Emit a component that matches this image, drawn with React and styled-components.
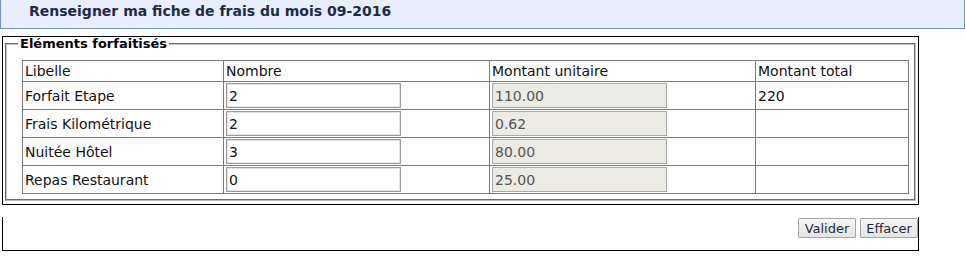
import styled, { createGlobalStyle } from "styled-components";

const GlobalStyle = createGlobalStyle`
  body {
    margin: 0;
    background: #ffffff;
    font-family: "DejaVu Sans", Verdana, sans-serif;
    font-size: 14px;
    color: #111111;
  }
`;

const lignes = [
  { libelle: "Forfait Etape", quantite: "2", montant: "110.00", total: "220" },
  { libelle: "Frais Kilométrique", quantite: "2", montant: "0.62", total: "" },
  { libelle: "Nuitée Hôtel", quantite: "3", montant: "80.00", total: "" },
  { libelle: "Repas Restaurant", quantite: "0", montant: "25.00", total: "" },
];

export default function App() {
  return (
    <>
      <GlobalStyle />
      <Title>Renseigner ma fiche de frais du mois 09-2016</Title>
      <Page>
        <CorpsForm>
          <Fieldset>
            <Legend>Eléments forfaitisés</Legend>
            <Table>
              <colgroup>
                <col style={{ width: 201 }} />
                <col style={{ width: 266 }} />
                <col style={{ width: 266 }} />
                <col />
              </colgroup>
              <thead>
                <tr>
                  <Th>Libelle</Th>
                  <Th>Nombre</Th>
                  <Th>Montant unitaire</Th>
                  <Th>Montant total</Th>
                </tr>
              </thead>
              <tbody>
                {lignes.map((l) => (
                  <tr key={l.libelle}>
                    <Td>{l.libelle}</Td>
                    <Td>
                      <Input type="text" defaultValue={l.quantite} />
                    </Td>
                    <Td>
                      <Input type="text" defaultValue={l.montant} disabled />
                    </Td>
                    <Td>{l.total}</Td>
                  </tr>
                ))}
              </tbody>
            </Table>
          </Fieldset>
        </CorpsForm>
        <PiedForm>
          <Button type="submit">Valider</Button>
          <Button type="reset">Effacer</Button>
        </PiedForm>
      </Page>
    </>
  );
}

const Title = styled.h2`
  margin: 0;
  height: 29px;
  padding: 1px 0 0 28px;
  box-sizing: border-box;
  background: #e8eefb;
  border: 1px solid #7393c9;
  border-top: none;
  font-size: 14px;
  font-weight: bold;
  line-height: 20px;
  color: #1f2b45;
`;

const Page = styled.div`
  width: 917px;
  margin-left: 2px;
`;

const CorpsForm = styled.div`
  margin-top: 7px;
  border: 1px solid #000000;
  padding: 0 0 3px;
`;

const Fieldset = styled.fieldset`
  margin: 0 2px;
  padding: 0 4px 5px 11px;
  border: 2px groove #c0c0c0;
`;

const Legend = styled.legend`
  padding: 0 2px;
  font-weight: bold;
  font-size: 13px;
  line-height: 14px;
  color: #000000;
`;

const Table = styled.table`
  width: 887px;
  margin: 9px 0 0 4px;
  border-collapse: collapse;
  table-layout: fixed;
`;

const Th = styled.th`
  height: 20px;
  padding: 0 2px;
  border: 1px solid #7a7a7a;
  font-weight: normal;
  text-align: left;
  line-height: 18px;
  color: #111111;
`;

const Td = styled.td`
  height: 27px;
  padding: 0 2px;
  border: 1px solid #7a7a7a;
  line-height: 18px;
`;

const Input = styled.input`
  display: block;
  width: 175px;
  height: 25px;
  box-sizing: border-box;
  padding: 0 2px;
  margin: 0;
  font-family: "DejaVu Sans", Verdana, sans-serif;
  font-size: 14px;
  color: #111111;
  background: #ffffff;
  border: 1px solid #9a9a9a;
  box-shadow: inset 0 0 0 1px #e2e2e2;
  outline: none;

  &:disabled {
    background: #ebeae4;
    color: #555555;
    border-color: #a8a8a8;
    box-shadow: none;
  }
`;

const PiedForm = styled.div`
  margin-top: 12px;
  height: 34px;
  box-sizing: border-box;
  padding-top: 1px;
  border: 1px solid #000000;
  border-top: none;
  display: flex;
  justify-content: flex-end;
  align-items: flex-start;
  gap: 4px;
`;

const Button = styled.button`
  width: 58px;
  height: 20px;
  padding: 0;
  font-family: "DejaVu Sans", Verdana, sans-serif;
  font-size: 13px;
  color: #1f2b3a;
  background: linear-gradient(#f6f6f6, #e4e4e4);
  border: 1px solid #a6a6a6;
  border-radius: 1px;
`;
